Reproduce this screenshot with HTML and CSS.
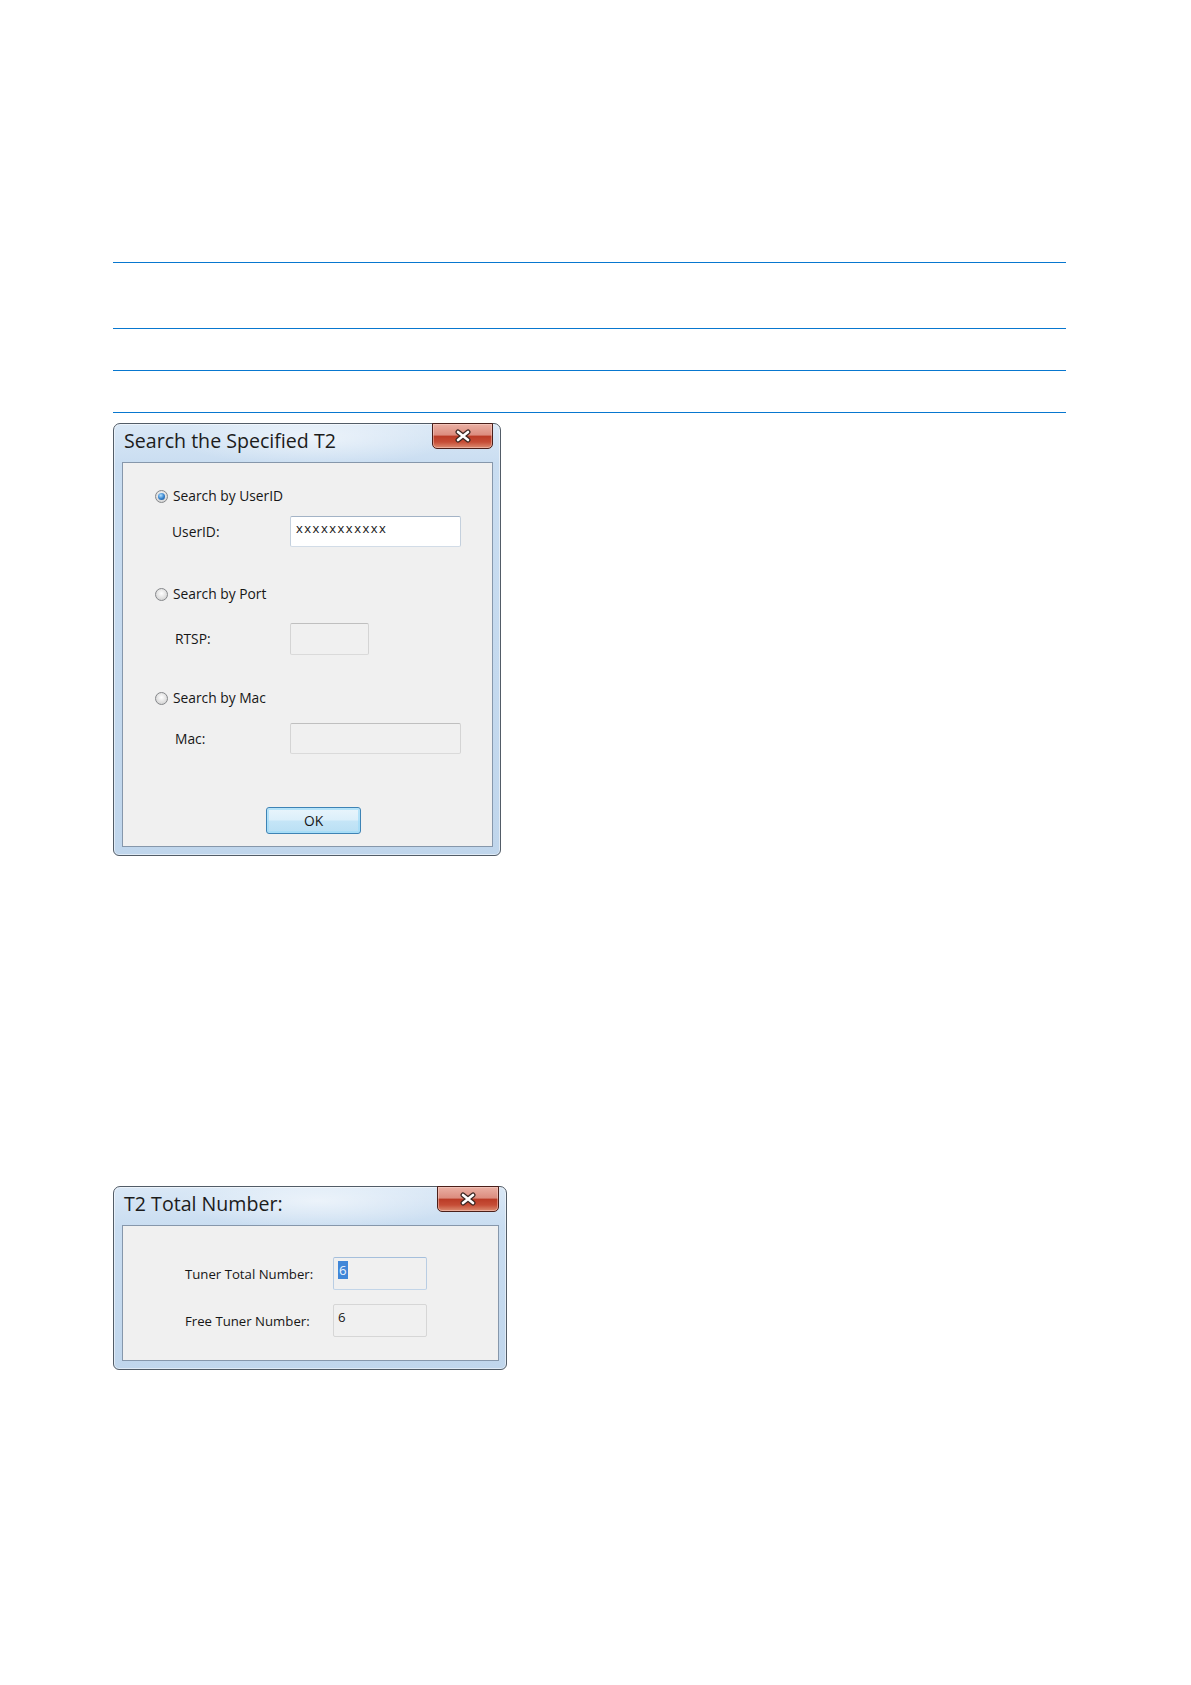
FILE: index.html
```html
<!DOCTYPE html>
<html lang="en">
<head>
  <meta charset="UTF-8" />
  <meta name="viewport" content="width=device-width, initial-scale=1.0" />
  <title>Search the Specified T2</title>
  <link rel="stylesheet" href="styles.css">
</head>
<body>
  <div class="page">
    <div class="rules">
      <div class="rule-row tall"></div>
      <div class="rule-row"></div>
      <div class="rule-row"></div>
    </div>

    <div class="window window-search">
      <div class="titlebar">
        <div class="title">Search the Specified T2</div>
        <div class="close-btn">
          <svg width="18" height="14" viewBox="0 0 18 14">
            <path d="M4 3 L14 11 M14 3 L4 11" stroke="#3b2622" stroke-width="5" stroke-linecap="round" fill="none"/>
            <path d="M4 3 L14 11 M14 3 L4 11" stroke="#ffffff" stroke-width="2.6" stroke-linecap="round" fill="none"/>
          </svg>
        </div>
      </div>
      <div class="panel panel-search">
        <div class="opt opt-userid">
          <span class="radio checked"></span>
          <span>Search by UserID</span>
        </div>
        <div class="field field-userid">
          <span class="field-label">UserID:</span>
          <div class="textbox wide"><span class="xs">xxxxxxxxxxx</span></div>
        </div>

        <div class="opt opt-port">
          <span class="radio"></span>
          <span>Search by Port</span>
        </div>
        <div class="field field-port">
          <span class="field-label">RTSP:</span>
          <div class="textbox narrow disabled"></div>
        </div>

        <div class="opt opt-mac">
          <span class="radio"></span>
          <span>Search by Mac</span>
        </div>
        <div class="field field-mac">
          <span class="field-label">Mac:</span>
          <div class="textbox wide disabled"></div>
        </div>

        <div class="actions">
          <button class="btn" type="button">OK</button>
        </div>
      </div>
    </div>

    <div class="window window-total">
      <div class="titlebar">
        <div class="title">T2 Total Number:</div>
        <div class="close-btn">
          <svg width="18" height="14" viewBox="0 0 18 14">
            <path d="M4 3 L14 11 M14 3 L4 11" stroke="#3b2622" stroke-width="5" stroke-linecap="round" fill="none"/>
            <path d="M4 3 L14 11 M14 3 L4 11" stroke="#ffffff" stroke-width="2.6" stroke-linecap="round" fill="none"/>
          </svg>
        </div>
      </div>
      <div class="panel panel-total">
        <div class="stat-row">
          <span>Tuner Total Number:</span>
          <div class="textbox stat focused"><span class="sel">6</span></div>
        </div>
        <div class="stat-row second">
          <span>Free Tuner Number:</span>
          <div class="textbox stat">6</div>
        </div>
      </div>
    </div>
  </div>
</body>
</html>
```

FILE: styles.css
```css
body {
  margin: 0;
  background-color: #fff;
  font-family: "Open Sans", "Noto Sans", sans-serif;
  color: #161616;
}

.page {
  padding: 262px 0 40px 113px;
}

/* empty table rows above the screenshots */
.rules {
  width: 953px;
  border-bottom: 1px solid #0877cf;
}

.rule-row {
  box-sizing: border-box;
  height: 42px;
  border-top: 1px solid #0877cf;
}

.rule-row.tall {
  height: 66px;
}

/* window chrome */
.window {
  box-sizing: border-box;
  border: 1px solid #525c67;
  border-radius: 7px 7px 6px 6px;
  padding: 0 7px 8px 8px;
  background:
    radial-gradient(ellipse 140px 28px at 52% 14px, rgba(255,255,255,0.55), rgba(255,255,255,0)),
    linear-gradient(#dae8f6, #c9ddf1 40px, #c0d6ec);
  box-shadow: inset 0 0 0 1px rgba(255,255,255,0.5);
}

.window-search {
  width: 388px;
  margin-top: 10px;
}

.window-total {
  width: 394px;
  margin-top: 330px;
}

.titlebar {
  display: flex;
  justify-content: space-between;
  align-items: flex-start;
  height: 38px;
}

.title {
  font-size: 19.6px;
  line-height: 24px;
  padding: 5px 0 0 2px;
  color: #1c1c1c;
}

.close-btn {
  box-sizing: border-box;
  width: 61px;
  height: 26px;
  margin-top: -1px;
  border: 1px solid #4a1f1a;
  border-radius: 0 0 5px 5px;
  background: linear-gradient(#eab0a4 0%, #dc8d7f 45%, #bb3c27 52%, #c64d36 75%, #dc8d72 100%);
  box-shadow: inset 0 0 0 1px rgba(255,220,210,0.45);
  display: flex;
  align-items: center;
  justify-content: center;
}

.window-total .close-btn {
  width: 62px;
}

.panel {
  border: 1px solid #8697ab;
  background-color: #f0f0f0;
  font-size: 13.8px;
  line-height: 18px;
}

.panel-search {
  padding: 23px 0 12px 0;
}

.panel-total {
  padding: 31px 0 23px 0;
  font-size: 13.2px;
}

/* radio options */
.opt {
  display: flex;
  align-items: center;
  gap: 5px;
  height: 20px;
  padding-left: 32px;
}

.opt-port { margin-top: 37px; }
.opt-mac { margin-top: 33px; }

.radio {
  flex: none;
  box-sizing: border-box;
  width: 13px;
  height: 13px;
  border-radius: 50%;
  border: 1px solid #85878a;
  background: radial-gradient(circle at 50% 40%, #ffffff 0, #e6e6e6 45%, #c9c9c9 100%);
  display: flex;
  align-items: center;
  justify-content: center;
}

.radio.checked::after {
  content: "";
  width: 7px;
  height: 7px;
  border-radius: 50%;
  background: radial-gradient(circle at 40% 35%, #b5e2ff 0, #3a86d0 50%, #184a86 100%);
}

/* label + textbox rows */
.field {
  display: grid;
  grid-template-columns: 118px auto;
  align-items: center;
  padding-left: 49px;
}

.field-userid { margin-top: 10px; }
.field-port { margin-top: 19px; }
.field-mac { margin-top: 15px; }

.field-port .field-label,
.field-mac .field-label {
  padding-left: 3px;
}

.textbox {
  box-sizing: border-box;
  height: 31px;
  padding: 2px 3px 0;
  border: 1px solid;
  border-color: #a3b3c6 #c4d0dd #d2dce7 #c4d0dd;
  border-radius: 2px;
  background-color: #fff;
}

.textbox.wide { width: 171px; }
.textbox.narrow { width: 79px; height: 32px; }

.textbox.disabled {
  background-color: #f0f0f0;
  border-color: #bfbfbf #d4d4d4 #dadada #d4d4d4;
}

.field-userid .textbox {
  padding-left: 5px;
  font-size: 13px;
}

.xs {
  letter-spacing: 1.5px;
}

.actions {
  margin-top: 53px;
  padding-left: 143px;
}

.btn {
  box-sizing: border-box;
  width: 95px;
  height: 27px;
  border: 1px solid #3d83b5;
  border-radius: 3px;
  background: linear-gradient(#e9f5fc 0%, #dbeffa 48%, #c5e5f7 52%, #b9dff4 100%);
  box-shadow: inset 0 0 0 2px rgba(160, 220, 248, 0.7);
  font-family: "Open Sans", "Noto Sans", sans-serif;
  font-size: 13.8px;
  color: #161616;
  padding: 0;
}

/* total number dialog */
.stat-row {
  display: grid;
  grid-template-columns: 148px 94px;
  align-items: center;
  padding-left: 62px;
}

.stat-row.second {
  margin-top: 14px;
}

.textbox.stat {
  height: 33px;
  padding: 3px 4px 0;
  background-color: #f0f0f0;
  border-color: #d6d6d6;
}

.textbox.stat.focused {
  border-color: #a5bfdc #b9cde3 #c3d5e8 #b9cde3;
}

.sel {
  background-color: #3f86d8;
  color: #eaf3ff;
  padding: 0 1px;
}
```
